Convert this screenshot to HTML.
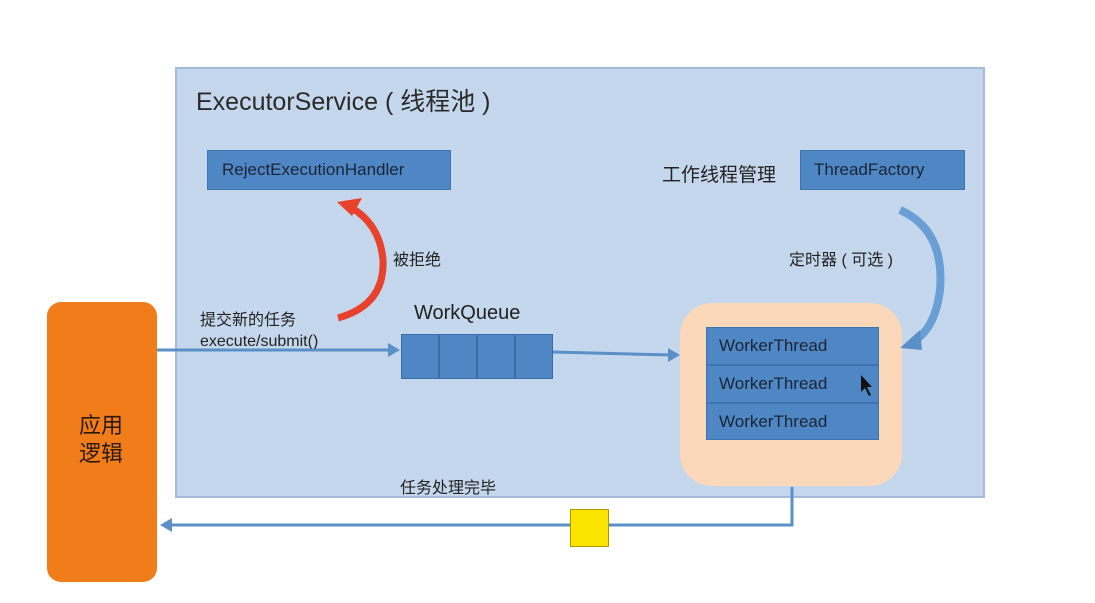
<!DOCTYPE html>
<html><head><meta charset="utf-8"><style>
body{margin:0;width:1095px;height:603px;background:#fff;position:relative;overflow:hidden;font-family:"Liberation Sans","Noto Sans CJK SC",sans-serif;color:#222}
.a{position:absolute}
.bx{position:absolute;background:#4f87c4;border:1px solid #3f74b0;box-sizing:border-box;color:#1a2436;font-size:17px;display:flex;align-items:center}
</style></head><body>
<div class="a" style="left:175px;top:67px;width:810px;height:431px;background:#c4d7ec;border:2px solid #a4bcd9;box-sizing:border-box"></div>
<div class="a" style="left:196px;top:82px;font-size:25px;color:#2a2a2a">ExecutorService ( 线程池 )</div>
<div class="bx" style="left:207px;top:150px;width:244px;height:40px;padding-left:14px">RejectExecutionHandler</div>
<div class="a" style="left:662px;top:160px;font-size:19px">工作线程管理</div>
<div class="bx" style="left:800px;top:150px;width:165px;height:40px;padding-left:13px">ThreadFactory</div>
<div class="a" style="left:393px;top:246px;font-size:16px">被拒绝</div>
<div class="a" style="left:789px;top:246px;font-size:16px">定时器 ( 可选 )</div>
<div class="a" style="left:200px;top:310px;font-size:16px;line-height:21px">提交新的任务<br>execute/submit()</div>
<div class="a" style="left:414px;top:302px;font-size:20px">WorkQueue</div>
<div class="a" style="left:401px;top:334px;width:152px;height:45px;display:flex">
<div style="flex:1;background:#4f87c4;border:1px solid #3a6da8"></div><div style="flex:1;background:#4f87c4;border:1px solid #3a6da8"></div><div style="flex:1;background:#4f87c4;border:1px solid #3a6da8"></div><div style="flex:1;background:#4f87c4;border:1px solid #3a6da8"></div></div>
<div class="a" style="left:680px;top:303px;width:222px;height:183px;background:#fcd8ba;border-radius:32px"></div>
<div class="bx" style="left:706px;top:327px;width:173px;height:38px;padding-left:12px">WorkerThread</div>
<div class="bx" style="left:706px;top:365px;width:173px;height:38px;padding-left:12px">WorkerThread</div>
<div class="bx" style="left:706px;top:403px;width:173px;height:37px;padding-left:12px">WorkerThread</div>
<div class="a" style="left:47px;top:302px;width:110px;height:280px;background:#f07c1a;border-radius:14px"></div>
<div class="a" style="left:79px;top:412px;font-size:22px;line-height:28px;color:#2a1a0a">应用<br>逻辑</div>
<div class="a" style="left:400px;top:474px;font-size:16px">任务处理完毕</div>
<svg class="a" style="left:0;top:0" width="1095" height="603">
<g stroke="#5a8fc8" stroke-width="3" fill="none">
<line x1="157" y1="350" x2="392" y2="350"/>
<line x1="553" y1="352" x2="672" y2="355"/>
<polyline points="792,487 792,525 170,525"/>
</g>
<g fill="#5a8fc8">
<polygon points="400,350 388,343 388,357"/>
<polygon points="680,355 668,348 668,362"/>
<polygon points="160,525 172,518 172,532"/>
</g>
<path d="M338,318 Q385,305 383,260 Q380,225 352,208" stroke="#e8412c" stroke-width="7" fill="none"/>
<polygon points="337,202 362,198 352,216" fill="#e8412c"/>
<path d="M900,210 Q945,230 940,290 Q935,330 912,342" stroke="#6a9fd6" stroke-width="8" fill="none"/>
<polygon points="900,348 920,330 922,350" fill="#5a8fc8"/>
<polygon points="861,375 861,392 865,388 869,396 871,395 867,387 872,387" fill="#111"/>
</svg>
<div class="a" style="left:570px;top:509px;width:39px;height:38px;background:#fbe400;border:1px solid #aa9a00;box-sizing:border-box"></div>
</body></html>
